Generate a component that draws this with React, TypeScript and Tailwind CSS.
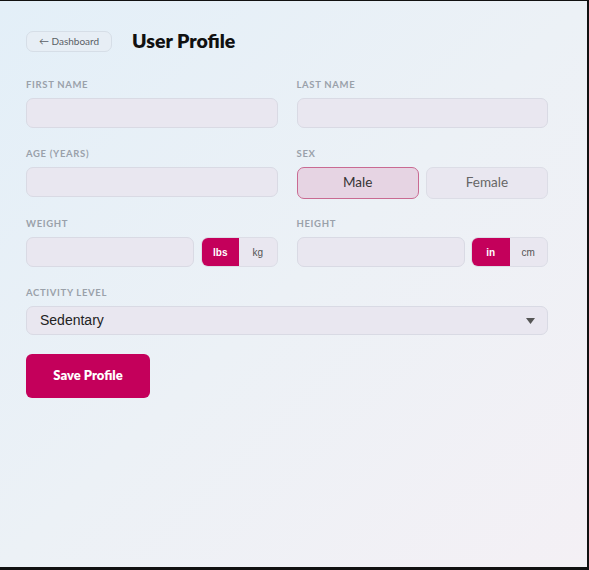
import { useState } from "react";

const inputCls =
  "w-full h-[30px] rounded-[7px] border border-[#d9dae4] bg-[#e9e7f0] px-3 text-[13px] text-[#333] outline-none";

function Label({ children }: { children: React.ReactNode }) {
  return (
    <label className="block text-[9.5px] leading-[12px] font-bold tracking-[0.07em] text-[#9aa1aa] mb-[7px]">
      {children}
    </label>
  );
}

function UnitToggle({
  options,
  value,
  onChange,
}: {
  options: string[];
  value: string;
  onChange: (v: string) => void;
}) {
  return (
    <div className="flex h-[30px] w-[77px] shrink-0 overflow-hidden rounded-[7px] border border-[#dcdde6] bg-[#e9e7f0]">
      {options.map((o) => (
        <button
          key={o}
          onClick={() => onChange(o)}
          className={
            o === value
              ? "flex-1 bg-[#c4005b] text-white font-bold text-[10px] font-['Liberation_Sans',Arial,sans-serif]"
              : "flex-1 text-[#555] text-[10px] font-['Liberation_Sans',Arial,sans-serif]"
          }
        >
          {o}
        </button>
      ))}
    </div>
  );
}

export default function App() {
  const [sex, setSex] = useState("Male");
  const [wUnit, setWUnit] = useState("lbs");
  const [hUnit, setHUnit] = useState("in");

  return (
    <div className="h-[570px] border-t border-r-2 border-b-[3px] border-[#111] bg-gradient-to-br from-[#e3eff8] via-[#ecf1f6] to-[#f4f0f5] font-['Lato','Noto_Sans',sans-serif]">
      <div className="w-[548px] pl-[26px] pt-[28px]">
        {/* header */}
        <div className="flex h-[24px] items-center gap-[20px] mb-[26px]">
          <button className="h-[21px] w-[86px] rounded-[7px] border border-[#d6dee7] bg-[#e7eef5] text-[10px] text-[#5a5f66]">
            ← Dashboard
          </button>
          <h1 className="text-[19.5px] font-extrabold text-[#111] leading-[24px]">User Profile</h1>
        </div>

        <div className="grid grid-cols-2 gap-x-[19px] gap-y-[19.5px]">
          <div>
            <Label>FIRST NAME</Label>
            <input className={inputCls} />
          </div>
          <div>
            <Label>LAST NAME</Label>
            <input className={inputCls} />
          </div>

          <div>
            <Label>AGE (YEARS)</Label>
            <input className={inputCls} />
          </div>
          <div>
            <Label>SEX</Label>
            <div className="flex gap-[7px]">
              {["Male", "Female"].map((s) => (
                <button
                  key={s}
                  onClick={() => setSex(s)}
                  className={
                    s === sex
                      ? "flex-1 h-[32px] rounded-[7px] border border-[#c96a92] bg-[#e6d4e3] text-[13.5px] text-[#333]"
                      : "flex-1 h-[32px] rounded-[7px] border border-[#dcdde6] bg-[#e9e7f0] text-[13.5px] text-[#666]"
                  }
                >
                  {s}
                </button>
              ))}
            </div>
          </div>

          <div>
            <Label>WEIGHT</Label>
            <div className="flex gap-[7px]">
              <input className={inputCls} />
              <UnitToggle options={["lbs", "kg"]} value={wUnit} onChange={setWUnit} />
            </div>
          </div>
          <div>
            <Label>HEIGHT</Label>
            <div className="flex gap-[6px]">
              <input className={inputCls} />
              <UnitToggle options={["in", "cm"]} value={hUnit} onChange={setHUnit} />
            </div>
          </div>

          <div className="col-span-2">
            <Label>ACTIVITY LEVEL</Label>
            <div className="relative">
              <select className="w-full h-[29px] appearance-none rounded-[7px] border border-[#d9dae4] bg-[#e9e7f0] pl-[13px] text-[14px] text-[#222] font-['Liberation_Sans',Arial,sans-serif] outline-none">
                <option>Sedentary</option>
                <option>Lightly Active</option>
                <option>Moderately Active</option>
                <option>Very Active</option>
              </select>
              <svg
                className="pointer-events-none absolute right-[13px] top-[12px]"
                width="9"
                height="6"
                viewBox="0 0 9 6"
              >
                <path d="M0 0h9L4.5 6z" fill="#555" />
              </svg>
            </div>
          </div>

          <div className="col-span-2">
            <button className="h-[44px] w-[124px] rounded-[6px] bg-[#c4005b] text-[13px] font-extrabold text-white">
              Save Profile
            </button>
          </div>
        </div>
      </div>
    </div>
  );
}
